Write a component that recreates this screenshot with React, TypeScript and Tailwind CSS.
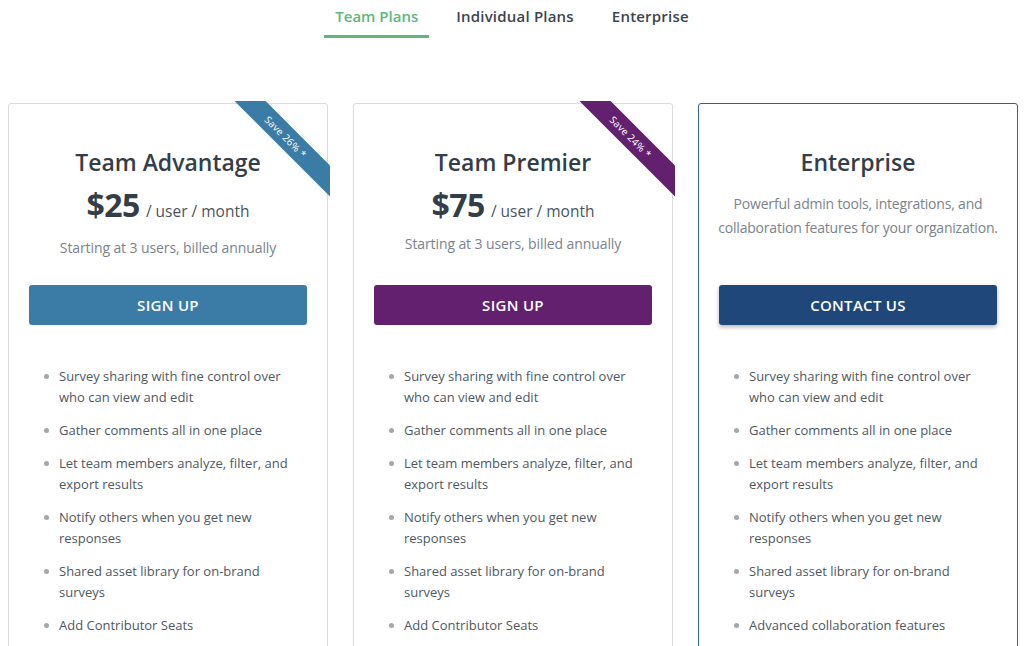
import React from 'react';

type Plan = {
    name: string;
    price?: string;
    sub?: string;
    subGap?: string;
    desc?: string[];
    cta: string;
    btn: string;
    border: string;
    ribbon?: { text: string; color: string };
    features: string[];
};

const common = [
    'Survey sharing with fine control over who can view and edit',
    'Gather comments all in one place',
    'Let team members analyze, filter, and export results',
    'Notify others when you get new responses',
    'Shared asset library for on-brand surveys',
];

const plans: Plan[] = [
    {
        name: 'Team Advantage',
        price: '$25',
        sub: 'Starting at 3 users, billed annually',
        subGap: 'pt-[13px]',
        cta: 'SIGN UP',
        btn: 'bg-[#3a7ca6]',
        border: 'border-[#d8dbdf]',
        ribbon: { text: 'Save 26% *', color: 'bg-[#3a7ca6]' },
        features: [...common, 'Add Contributor Seats'],
    },
    {
        name: 'Team Premier',
        price: '$75',
        sub: 'Starting at 3 users, billed annually',
        subGap: 'pt-[9px]',
        cta: 'SIGN UP',
        btn: 'bg-[#63206f]',
        border: 'border-[#d8dbdf]',
        ribbon: { text: 'Save 24% *', color: 'bg-[#63206f]' },
        features: [...common, 'Add Contributor Seats'],
    },
    {
        name: 'Enterprise',
        desc: ['Powerful admin tools, integrations, and', 'collaboration features for your organization.'],
        cta: 'CONTACT US',
        btn: 'bg-[#1f477a] shadow-[0_2px_4px_rgba(0,0,0,0.3)]',
        border: 'border-[#35608f]',
        features: [...common, 'Advanced collaboration features'],
    },
];

const Ribbon: React.FC<{ text: string; color: string }> = ({ text, color }) => (
    <div className="absolute -top-[3px] -right-[3px] w-[96px] h-[96px] overflow-hidden pointer-events-none">
        <div
            className={`absolute left-[-19px] top-[29px] w-[150px] h-[22px] rotate-45 ${color} flex items-center justify-center pr-[12px] text-white text-[10px] tracking-[0.2px]`}
        >
            {text}
        </div>
    </div>
);

const PlanCard: React.FC<{ plan: Plan }> = ({ plan }) => (
    <div className={`relative w-[320px] shrink-0 border ${plan.border} rounded-[3px] bg-white px-[20px] pt-[42px] pb-[40px]`}>
        {plan.ribbon && <Ribbon text={plan.ribbon.text} color={plan.ribbon.color} />}
        <h2 className="text-center text-[23px] leading-[32px] font-semibold text-[#333e48]">{plan.name}</h2>

        {plan.price ? (
            <>
                <div className="mt-[7px] flex items-baseline justify-center h-[40px]">
                    <span className="text-[32px] leading-[40px] font-bold text-[#333e48] tracking-[-0.5px]">{plan.price}</span>
                    <span className="ml-[6px] text-[15.5px] text-[#4b5560]">/ user / month</span>
                </div>
                <div className={`h-[60px] ${plan.subGap}`}>
                    <p className="text-center text-[14px] leading-[20px] text-[#7b838b] tracking-[-0.1px]">{plan.sub}</p>
                </div>
            </>
        ) : (
            <div className="h-[107px] pt-[14px]">
                <div className="text-center text-[14px] leading-[24px] text-[#7b838b] whitespace-nowrap tracking-[-0.2px] -mx-[10px]">
                    {plan.desc?.map(line => <p key={line}>{line}</p>)}
                </div>
            </div>
        )}

        <button className={`w-full h-[40px] rounded-[3px] ${plan.btn} text-white text-[15px] font-semibold tracking-[0.3px]`}>
            {plan.cta}
        </button>

        <ul className="mt-[41px] pl-[15px] pr-[10px] flex flex-col gap-[12px]">
            {plan.features.map(f => (
                <li key={f} className="flex text-[13px] leading-[21px] text-[#4f5862]">
                    <span className="mt-[8px] mr-[10px] w-[5px] h-[5px] rounded-full bg-[#a3a8ad] shrink-0" />
                    <span className="max-w-[230px]">{f}</span>
                </li>
            ))}
        </ul>
    </div>
);

const App: React.FC = () => {
    const tabs = ['Team Plans', 'Individual Plans', 'Enterprise'];
    return (
        <div className="w-[1024px] h-[646px] overflow-hidden bg-white font-['Open_Sans',sans-serif]">
            <nav className="flex justify-center gap-[16px]">
                {tabs.map((t, i) => (
                    <button
                        key={t}
                        className={`px-[11px] pt-[6px] pb-[8px] text-[15px] leading-[21px] font-semibold border-b-[3px] ${
                            i === 0 ? 'text-[#5cb97a] border-[#5cb97a]' : 'text-[#3b4550] border-transparent tracking-[0.2px]'
                        }`}
                    >
                        {t}
                    </button>
                ))}
            </nav>

            <main className="mt-[65px] px-[8px] flex gap-[25px]">
                {plans.map(p => (
                    <PlanCard key={p.name} plan={p} />
                ))}
            </main>
        </div>
    );
};

export default App;
